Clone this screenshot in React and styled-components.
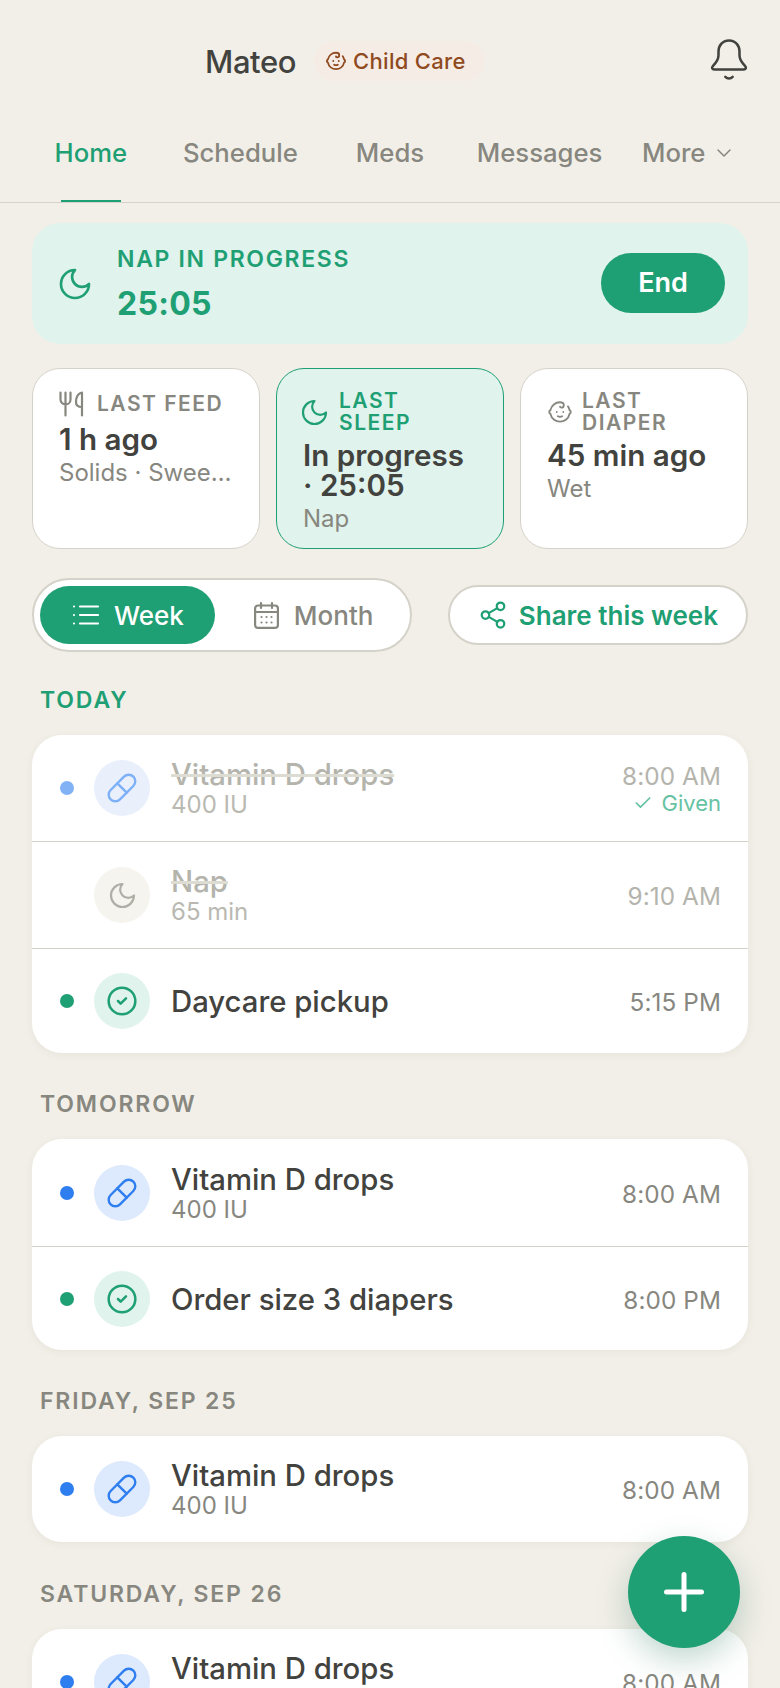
import React from 'react'
import styled, { createGlobalStyle } from 'styled-components'
import { Baby, Check, ChevronDown, CircleCheck, Pill, Plus, Share2 } from 'lucide-react'

const GREEN = '#1f9f74'
const MINT = '#e0f3ec'
const INK = '#42423e'
const MUTED = '#87877f'
const LINE = '#d5d2c9'
const BLUE = '#2f7ef0'

const GlobalStyle = createGlobalStyle`
    html, body {
        margin: 0;
        height: 100%;
        overflow: hidden;
        background: #f2efe8;
    }
    * {
        box-sizing: border-box;
    }
`

const Page = styled.div`
    position: relative;
    height: 1688px;
    overflow: hidden;
    background: #f2efe8;
    color: ${INK};
    font-family: Inter, 'Noto Sans', sans-serif;
`

const Header = styled.header`
    display: flex;
    align-items: center;
    height: 122px;
    padding: 0 32px 0 205px;
`
const Name = styled.div`
    font-size: 31px;
    font-weight: 500;
    letter-spacing: -0.4px;
`
const Badge = styled.div`
    display: flex;
    align-items: center;
    gap: 6px;
    height: 40px;
    margin-left: 18px;
    padding: 0 19px 0 11px;
    border-radius: 20px;
    background: #f6ece6;
    color: #8f4a20;
    font-size: 22px;
    font-weight: 500;
    letter-spacing: 0.3px;
`
const BellButton = styled.div`
    display: flex;
    margin-left: auto;
    margin-top: -3px;
    color: ${INK};
`

const Tabs = styled.nav`
    display: grid;
    grid-template-columns: repeat(5, 1fr);
    height: 81px;
    padding: 0 16px;
    border-bottom: 1px solid ${LINE};
`
const Tab = styled.div`
    position: relative;
    display: flex;
    align-items: center;
    justify-content: center;
    gap: 7px;
    height: 61px;
    color: ${p => (p.$active ? GREEN : MUTED)};
    font-size: 25.7px;
    font-weight: 500;
`
const TabMark = styled.span`
    position: absolute;
    left: 50%;
    top: 78px;
    width: 60px;
    height: 2px;
    margin-left: -30px;
    background: ${GREEN};
`

const Content = styled.main`
    padding: 20px 32px 0;
`

const Banner = styled.section`
    display: flex;
    align-items: center;
    height: 121px;
    padding: 0 23px 0 29px;
    border-radius: 28px;
    background: ${MINT};
    color: ${GREEN};
`
const BannerText = styled.div`
    margin-left: 28px;
`
const BannerLabel = styled.div`
    font-size: 23px;
    font-weight: 600;
    letter-spacing: 1.67px;
`
const Timer = styled.div`
    margin-top: 13px;
    font-size: 32px;
    font-weight: 700;
    letter-spacing: 0.3px;
    line-height: 36px;
`
const EndButton = styled.button`
    width: 124px;
    height: 60px;
    margin-top: -2px;
    margin-left: auto;
    border: 0;
    border-radius: 30px;
    background: ${GREEN};
    color: #fff;
    font-family: inherit;
    font-size: 27px;
    font-weight: 600;
`

const Stats = styled.section`
    display: grid;
    grid-template-columns: repeat(3, 1fr);
    gap: 16px;
    margin-top: 24px;
`
const StatCard = styled.div`
    height: 181px;
    min-width: 0;
    padding: 21px 20px 0 26px;
    border: 1px solid ${p => (p.$active ? GREEN : LINE)};
    border-radius: 28px;
    background: ${p => (p.$active ? MINT : '#fff')};
`
const StatHead = styled.div`
    display: flex;
    align-items: center;
    gap: ${p => p.$gap}px;
    min-height: 28px;
    color: ${p => (p.$active ? GREEN : MUTED)};
`
const StatLabel = styled.div`
    max-width: 128px;
    font-size: 21px;
    font-weight: 600;
    letter-spacing: 1.5px;
    line-height: 22px;
`
const StatValue = styled.div`
    margin-top: 6px;
    padding-right: 8px;
    font-size: 29.6px;
    font-weight: 600;
    line-height: 30px;
`
const StatSub = styled.div`
    margin-top: 5px;
    overflow: hidden;
    color: ${MUTED};
    font-size: 24px;
    line-height: 27px;
    text-overflow: ellipsis;
    white-space: nowrap;
`

const Controls = styled.section`
    display: flex;
    align-items: center;
    justify-content: space-between;
    margin-top: 29px;
`
const Toggle = styled.div`
    display: flex;
    gap: 6px;
    height: 74px;
    padding: 6px;
    border: 2px solid ${LINE};
    border-radius: 37px;
    background: #fff;
`
const Segment = styled.div`
    display: flex;
    align-items: center;
    gap: 15px;
    height: 58px;
    padding: 0 31px 0 33px;
    border-radius: 29px;
    background: ${p => (p.$active ? GREEN : 'transparent')};
    color: ${p => (p.$active ? '#fff' : MUTED)};
    font-size: 26px;
    font-weight: 500;
`
const ShareButton = styled.button`
    display: flex;
    align-items: center;
    gap: 11px;
    height: 60px;
    padding: 0 28px;
    border: 2px solid ${LINE};
    border-radius: 30px;
    background: #fff;
    color: ${GREEN};
    font-family: inherit;
    font-size: 26px;
    font-weight: 600;
`

const Day = styled.section`
    margin-top: ${p => p.$top || 39}px;
`
const DayLabel = styled.h2`
    margin: 0 0 22px 8px;
    color: ${p => (p.$today ? GREEN : MUTED)};
    font-size: 23px;
    font-weight: 600;
    letter-spacing: 1.85px;
    line-height: 26px;
`
const EventCard = styled.div`
    overflow: hidden;
    border-radius: 30px;
    background: #fff;
    box-shadow: 0 2px 8px rgba(70, 65, 50, 0.06);
`
const Row = styled.div`
    display: flex;
    align-items: center;
    height: ${p => p.$height || 105}px;
    padding: 0 27px 0 28px;
    & + & {
        border-top: 1px solid ${LINE};
    }
`
const Dot = styled.span`
    flex: none;
    width: 14px;
    height: 14px;
    border-radius: 50%;
    background: ${p => p.$color};
    opacity: ${p => (p.$done ? 0.6 : 1)};
`
const IconCircle = styled.div`
    display: flex;
    flex: none;
    align-items: center;
    justify-content: center;
    width: 56px;
    height: 56px;
    margin-left: 20px;
    border-radius: 50%;
    background: ${p => p.$bg};
    color: ${p => p.$color};
`
const RowText = styled.div`
    flex: 1;
    min-width: 0;
    margin-left: 21px;
    padding-top: ${p => (p.$stacked ? 4 : 2)}px;
`
const Title = styled.div`
    color: ${p => (p.$done ? '#b4b4ad' : INK)};
    font-size: 29.3px;
    font-weight: 500;
    line-height: 30px;
    text-decoration: ${p => (p.$done ? 'line-through' : 'none')};
    text-decoration-color: #dddcd3;
    text-decoration-thickness: 3px;
`
const Sub = styled.div`
    color: ${p => (p.$done ? '#b9b9b2' : MUTED)};
    font-size: 24px;
    line-height: 30px;
`
const Times = styled.div`
    padding-top: ${p => (p.$given ? 0 : 2)}px;
    text-align: right;
`
const Time = styled.div`
    color: ${p => (p.$done ? '#b4b4ad' : MUTED)};
    font-size: 24.3px;
    letter-spacing: 0.1px;
    line-height: 28px;
`
const Given = styled.div`
    display: flex;
    align-items: center;
    justify-content: flex-end;
    gap: 8px;
    margin-top: 1px;
    color: #66c2a2;
    font-size: 22px;
    line-height: 24px;
`

const Fab = styled.button`
    position: absolute;
    right: 40px;
    bottom: 40px;
    display: flex;
    align-items: center;
    justify-content: center;
    width: 112px;
    height: 112px;
    padding: 0;
    border: 0;
    border-radius: 50%;
    background: ${GREEN};
    box-shadow: 0 12px 32px rgba(31, 110, 85, 0.28);
    color: #fff;
`

const Glyph = styled.svg`
    flex: none;
    display: block;
    overflow: visible;
    fill: none;
    stroke: currentColor;
    stroke-linecap: round;
    stroke-linejoin: round;
`

const Moon = ({ size, stroke = 1.7 }) => (
    <Glyph width={size} height={size} viewBox='3 3 18 18' strokeWidth={stroke}>
        <path d='M12 3a6 6 0 0 0 9 9 9 9 0 1 1-9-9Z' />
    </Glyph>
)

const Bell = () => (
    <Glyph width='38' height='42' viewBox='0 0 36 40' strokeWidth='2.4'>
        <path d='M18 1.5C11.5 1.5 8 6.5 8 12v3.5C8 20 5.8 22.5 2.8 25.5 1 27.3 2 29 4 29h28c2 0 3-1.7 1.2-3.5C30.2 22.5 28 20 28 15.5V12C28 6.5 24.5 1.5 18 1.5Z' />
        <path d='M14.5 36c2 2 5 2 7 0' />
    </Glyph>
)

const Fork = () => (
    <Glyph width='25' height='26' viewBox='0 0 25 26' strokeWidth='2.2'>
        <path d='M1.5 1.5v7a5 5 0 0 0 10 0v-7M6.5 1.5v23' />
        <path d='M23 24.5v-23c-4 1-6 5-6 9.5 0 3.500 2 5 6 5' />
    </Glyph>
)

const ListGlyph = () => (
    <Glyph width='26' height='20' viewBox='0 0 26 20' strokeWidth='2.2'>
        <path d='M1 1.500h.01M1 10h.01M1 18.500h.01M7 1.500h18M7 10h18M7 18.500h18' />
    </Glyph>
)

const CalendarGlyph = () => (
    <Glyph width='25' height='27' viewBox='0 0 25 27' strokeWidth='2.2'>
        <rect x='1.100' y='3.500' width='22.800' height='22.400' rx='3' />
        <path d='M1.100 10h22.800M7 1v5M18 1v5' />
        <path d='M7.500 15h.01M12.500 15h.01M17.500 15h.01M7.500 20.500h.01M12.500 20.500h.01M17.500 20.500h.01' />
    </Glyph>
)

const pillIcon = <Pill size={32} strokeWidth={1.8} />
const checkIcon = <CircleCheck size={32} strokeWidth={1.9} />

const Event = ({ dotColor, bg, color, icon, title, sub, time, done, given, height }) => (
    <Row $height={height}>
        <Dot $color={dotColor || 'transparent'} $done={done} />
        <IconCircle $bg={bg} $color={color}>{icon}</IconCircle>
        <RowText $stacked={!!sub}>
            <Title $done={done}>{title}</Title>
            {sub && <Sub $done={done}>{sub}</Sub>}
        </RowText>
        <Times $given={given}>
            <Time $done={done}>{time}</Time>
            {given && <Given><Check size={20} strokeWidth={2} />Given</Given>}
        </Times>
    </Row>
)

const Vitamin = ({ height }) => (
    <Event dotColor={BLUE} bg='#dde9fc' color={BLUE} icon={pillIcon} title='Vitamin D drops' sub='400 IU' time='8:00 AM' height={height} />
)

const App = () => (
    <Page>
        <GlobalStyle />
        <Header>
            <Name>Mateo</Name>
            <Badge><Baby size={22} strokeWidth={2} />Child Care</Badge>
            <BellButton><Bell /></BellButton>
        </Header>
        <Tabs>
            <Tab $active>Home<TabMark /></Tab>
            <Tab>Schedule</Tab>
            <Tab>Meds</Tab>
            <Tab>Messages</Tab>
            <Tab>More<ChevronDown size={24} strokeWidth={1.5} /></Tab>
        </Tabs>
        <Content>
            <Banner>
                <Moon size={28} />
                <BannerText>
                    <BannerLabel>NAP IN PROGRESS</BannerLabel>
                    <Timer>25:05</Timer>
                </BannerText>
                <EndButton>End</EndButton>
            </Banner>
            <Stats>
                <StatCard>
                    <StatHead $gap={13}><Fork /><StatLabel>LAST FEED</StatLabel></StatHead>
                    <StatValue>1 h ago</StatValue>
                    <StatSub>Solids · Sweet potato</StatSub>
                </StatCard>
                <StatCard $active>
                    <StatHead $active $gap={13}><Moon size={23} /><StatLabel>LAST SLEEP</StatLabel></StatHead>
                    <StatValue>In progress · 25:05</StatValue>
                    <StatSub>Nap</StatSub>
                </StatCard>
                <StatCard>
                    <StatHead $gap={9}><Baby size={26} strokeWidth={1.7} /><StatLabel>LAST DIAPER</StatLabel></StatHead>
                    <StatValue>45 min ago</StatValue>
                    <StatSub>Wet</StatSub>
                </StatCard>
            </Stats>
            <Controls>
                <Toggle>
                    <Segment $active><ListGlyph />Week</Segment>
                    <Segment><CalendarGlyph />Month</Segment>
                </Toggle>
                <ShareButton><Share2 size={30} strokeWidth={1.8} />Share this week</ShareButton>
            </Controls>
            <Day $top={35}>
                <DayLabel $today>TODAY</DayLabel>
                <EventCard>
                    <Event done given dotColor={BLUE} bg='#e9f0fc' color='#7db0f7' icon={pillIcon} title='Vitamin D drops' sub='400 IU' time='8:00 AM' height={106} />
                    <Event done bg='#f5f4ef' color='#b0aea6' icon={<Moon size={23} />} title='Nap' sub='65 min' time='9:10 AM' height={107} />
                    <Event dotColor={GREEN} bg={MINT} color={GREEN} icon={checkIcon} title='Daycare pickup' time='5:15 PM' />
                </EventCard>
            </Day>
            <Day $top={38}>
                <DayLabel>TOMORROW</DayLabel>
                <EventCard>
                    <Vitamin height={107} />
                    <Event dotColor={GREEN} bg={MINT} color={GREEN} icon={checkIcon} title='Order size 3 diapers' time='8:00 PM' height={104} />
                </EventCard>
            </Day>
            <Day $top={38}>
                <DayLabel>FRIDAY, SEP 25</DayLabel>
                <EventCard>
                    <Vitamin height={106} />
                </EventCard>
            </Day>
            <Day>
                <DayLabel>SATURDAY, SEP 26</DayLabel>
                <EventCard>
                    <Vitamin height={106} />
                </EventCard>
            </Day>
        </Content>
        <Fab><Plus size={60} strokeWidth={2} /></Fab>
    </Page>
)

export default App
